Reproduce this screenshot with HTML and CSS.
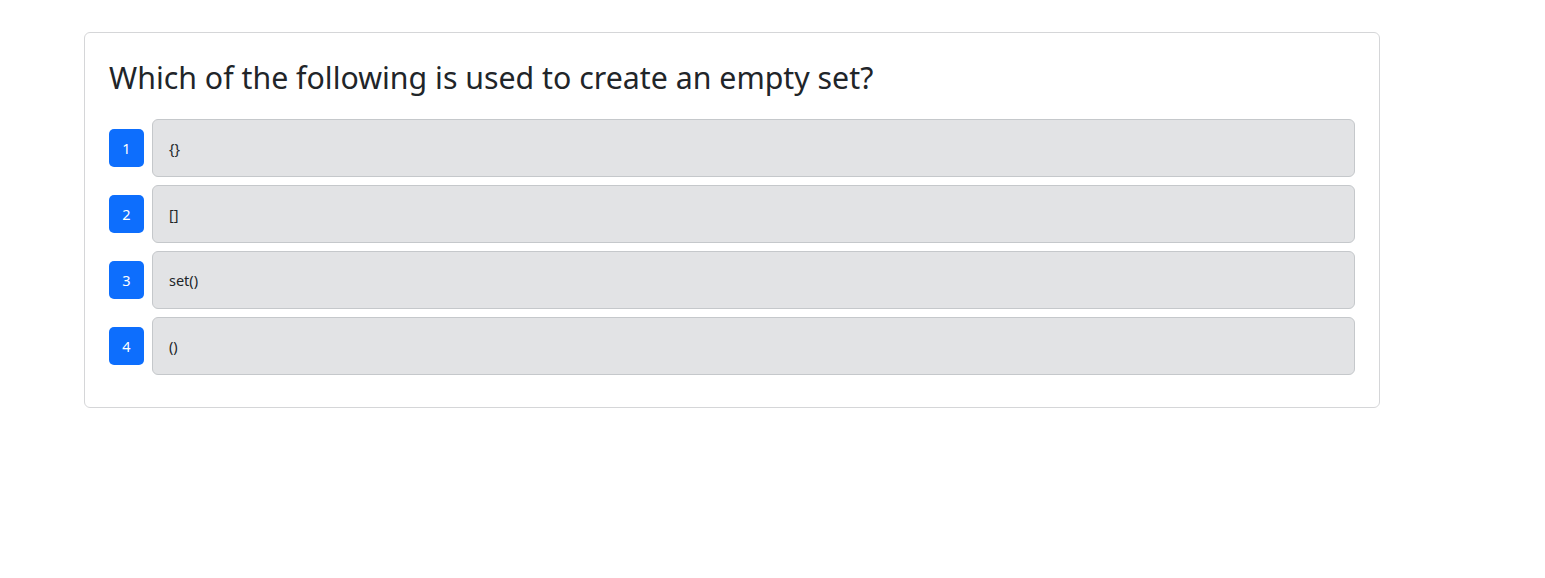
FILE: index.html
```html
<!DOCTYPE html>
<html lang="en">
<head>
<meta charset="utf-8">
<title>Quiz</title>
<link rel="stylesheet" href="styles.css">
</head>
<body>
<div class="page">
  <div class="card">
    <h3 class="question">Which of the following is used to create an empty set?</h3>
    <div class="options">
      <div class="option"><span class="num">1</span><div class="answer">{}</div></div>
      <div class="option"><span class="num">2</span><div class="answer">[]</div></div>
      <div class="option"><span class="num">3</span><div class="answer">set()</div></div>
      <div class="option"><span class="num">4</span><div class="answer">()</div></div>
    </div>
  </div>
</div>
</body>
</html>
```
FILE: styles.css
```css
html, body {
  margin: 0;
  padding: 0;
  background: #fff;
}
body {
  font-family: "Noto Sans", "Open Sans", sans-serif;
  color: #212529;
}
.page {
  padding: 32px 165px 0 84px;
}
.card {
  border: 1px solid #d5d6d8;
  border-radius: 6px;
  padding: 24px 24px 32px;
}
.question {
  margin: 0 0 20px 0;
  font-weight: 400;
  font-size: 30.3px;
  line-height: 42px;
}
.options {
  display: flex;
  flex-direction: column;
  gap: 8px;
}
.option {
  display: flex;
  align-items: center;
  gap: 8px;
}
.num {
  width: 35px;
  height: 38px;
  flex: none;
  background: #0d6efd;
  color: #fff;
  border-radius: 5px;
  display: flex;
  align-items: center;
  justify-content: center;
  font-size: 14.5px;
}
.answer {
  flex: 1;
  height: 56px;
  box-sizing: content-box;
  border: 1px solid #c5c8cb;
  background: #e2e3e5;
  border-radius: 6px;
  padding: 0 16px;
  display: flex;
  align-items: center;
  font-size: 14.5px;
}
```
